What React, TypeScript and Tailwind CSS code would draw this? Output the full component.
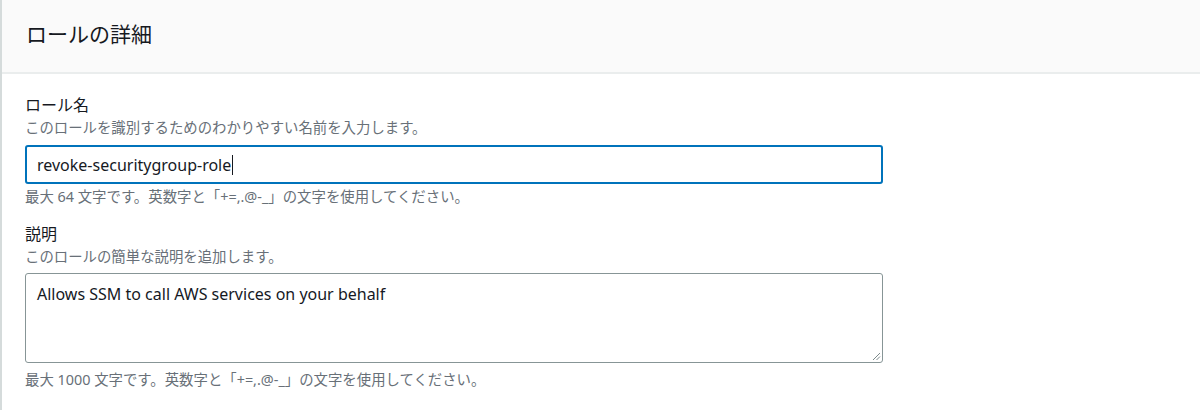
import React from "react";

export default function App() {
  const font = { fontFamily: '"Noto Sans", "Noto Sans CJK JP", sans-serif' };
  return (
    <div className="w-[1200px] h-[410px] bg-white overflow-hidden" style={font}>
      <div className="h-full border-l-2 border-[#d5dbdb] flex flex-col">
        <div className="h-[74px] bg-[#fafafa] border-b-2 border-[#eaeded] flex items-center pl-[24px] shrink-0">
          <h2 className="text-[21px] leading-[28px] text-[#16191f] font-normal mb-[4px]">ロールの詳細</h2>
        </div>
        <div className="pl-[23px] pt-[20px] flex flex-col">
          <div className="w-[858px] flex flex-col">
            <label className="text-[16px] leading-[22px] text-[#16191f]">ロール名</label>
            <div className="text-[14.4px] leading-[20px] text-[#687078] mt-[2px]">
              このロールを識別するためのわかりやすい名前を入力します。
            </div>
            <div className="mt-[7px] h-[39px] border-2 border-[#0073bb] rounded-[3px] flex items-center pl-[10px] text-[16px] text-[#16191f]">
              <span>revoke-securitygroup-role</span>
              <span className="inline-block w-[1px] h-[20px] bg-[#16191f] ml-[1px]"></span>
            </div>
            <div className="text-[14.4px] leading-[20px] text-[#687078] mt-[3px]">
              最大 64 文字です。英数字と「+=,.@-_」の文字を使用してください。
            </div>
            <label className="text-[16px] leading-[22px] text-[#16191f] mt-[16px]">説明</label>
            <div className="text-[14.4px] leading-[20px] text-[#687078] mt-[2px]">
              このロールの簡単な説明を追加します。
            </div>
            <div className="relative mt-[6px] h-[90px] border border-[#879596] rounded-[3px] pl-[11px] pt-[8px] text-[16px] leading-[24px] text-[#16191f]">
              Allows SSM to call AWS services on your behalf
              <svg className="absolute right-[1px] bottom-[1px]" width="10" height="10" viewBox="0 0 10 10">
                <line x1="2" y1="9" x2="9" y2="2" stroke="#7d8a8b" strokeWidth="1" />
                <line x1="5.5" y1="9" x2="9" y2="5.5" stroke="#7d8a8b" strokeWidth="1" />
              </svg>
            </div>
            <div className="text-[14.4px] leading-[20px] text-[#687078] mt-[7px]">
              最大 1000 文字です。英数字と「+=,.@-_」の文字を使用してください。
            </div>
          </div>
        </div>
      </div>
    </div>
  );
}
